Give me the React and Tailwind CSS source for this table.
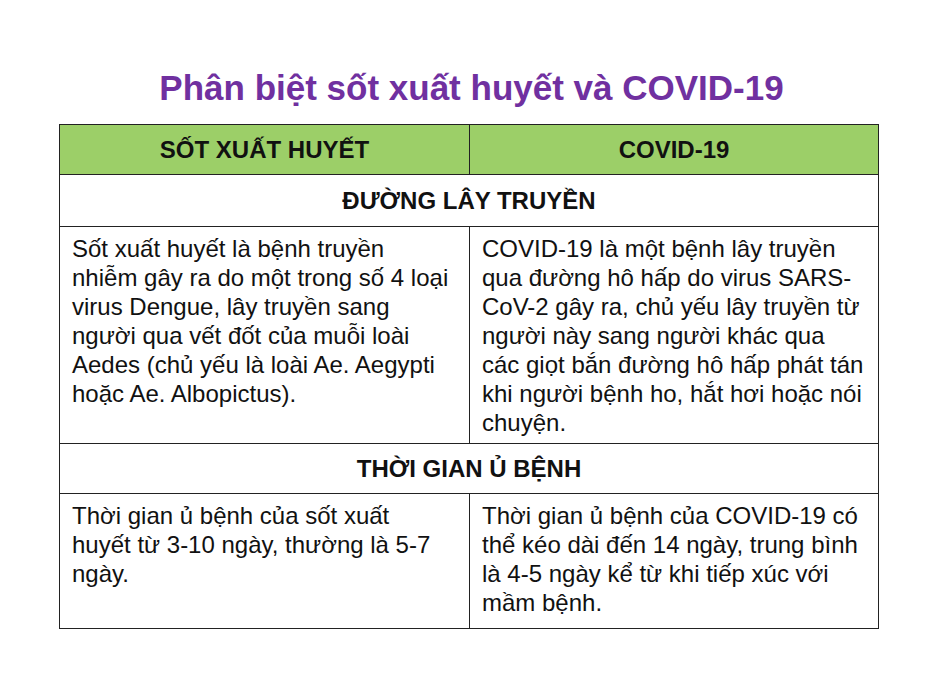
const rows = [
  {
    section: "ĐƯỜNG LÂY TRUYỀN",
    sectionHeight: "h-[52px]",
    height: "h-[217px]",
    left: [
      "Sốt xuất huyết là bệnh truyền",
      "nhiễm gây ra do một trong số 4 loại",
      "virus Dengue, lây truyền sang",
      "người qua vết đốt của muỗi loài",
      "Aedes (chủ yếu là loài Ae. Aegypti",
      "hoặc Ae. Albopictus).",
    ],
    right: [
      "COVID-19 là một bệnh lây truyền",
      "qua đường hô hấp do virus SARS-",
      "CoV-2 gây ra, chủ yếu lây truyền từ",
      "người này sang người khác qua",
      "các giọt bắn đường hô hấp phát tán",
      "khi người bệnh ho, hắt hơi hoặc nói",
      "chuyện.",
    ],
  },
  {
    section: "THỜI GIAN Ủ BỆNH",
    sectionHeight: "h-[50px]",
    height: "h-[135px]",
    left: [
      "Thời gian ủ bệnh của sốt xuất",
      "huyết từ 3-10 ngày, thường là 5-7",
      "ngày.",
    ],
    right: [
      "Thời gian ủ bệnh của COVID-19 có",
      "thể kéo dài đến 14 ngày, trung bình",
      "là 4-5 ngày kể từ khi tiếp xúc với",
      "mầm bệnh.",
    ],
  },
];

function Cell({ lines }) {
  return (
    <td className="border border-[#222] align-top pl-[12px] pr-[6px] pt-[7px] text-[24px] leading-[29px]">
      {lines.map((l) => (
        <div key={l} className="whitespace-nowrap">{l}</div>
      ))}
    </td>
  );
}

export default function App() {
  return (
    <div className="w-[941px] h-[688px] bg-white font-['Liberation_Sans',Arial,sans-serif] text-[#111]">
      <h1 className="pt-[68px] h-[124px] text-center text-[35px] font-bold text-[#7030a0] leading-[40px] pl-[2px]">
        Phân biệt sốt xuất huyết và COVID-19
      </h1>
      <table className="ml-[59px] w-[820px] border-collapse table-fixed">
        <thead>
          <tr className="h-[50px] bg-[#9ccf68]">
            <th className="w-[410px] border border-[#222] text-[24px] font-bold text-center">SỐT XUẤT HUYẾT</th>
            <th className="border border-[#222] text-[24px] font-bold text-center">COVID-19</th>
          </tr>
        </thead>
        <tbody>
          {rows.map((r) => [
            <tr key={r.section + "-h"} className={r.sectionHeight}>
              <td colSpan={2} className="border border-[#222] text-center text-[24px] font-bold">
                {r.section}
              </td>
            </tr>,
            <tr key={r.section + "-b"} className={r.height}>
              <Cell lines={r.left} />
              <Cell lines={r.right} />
            </tr>,
          ])}
        </tbody>
      </table>
    </div>
  );
}
